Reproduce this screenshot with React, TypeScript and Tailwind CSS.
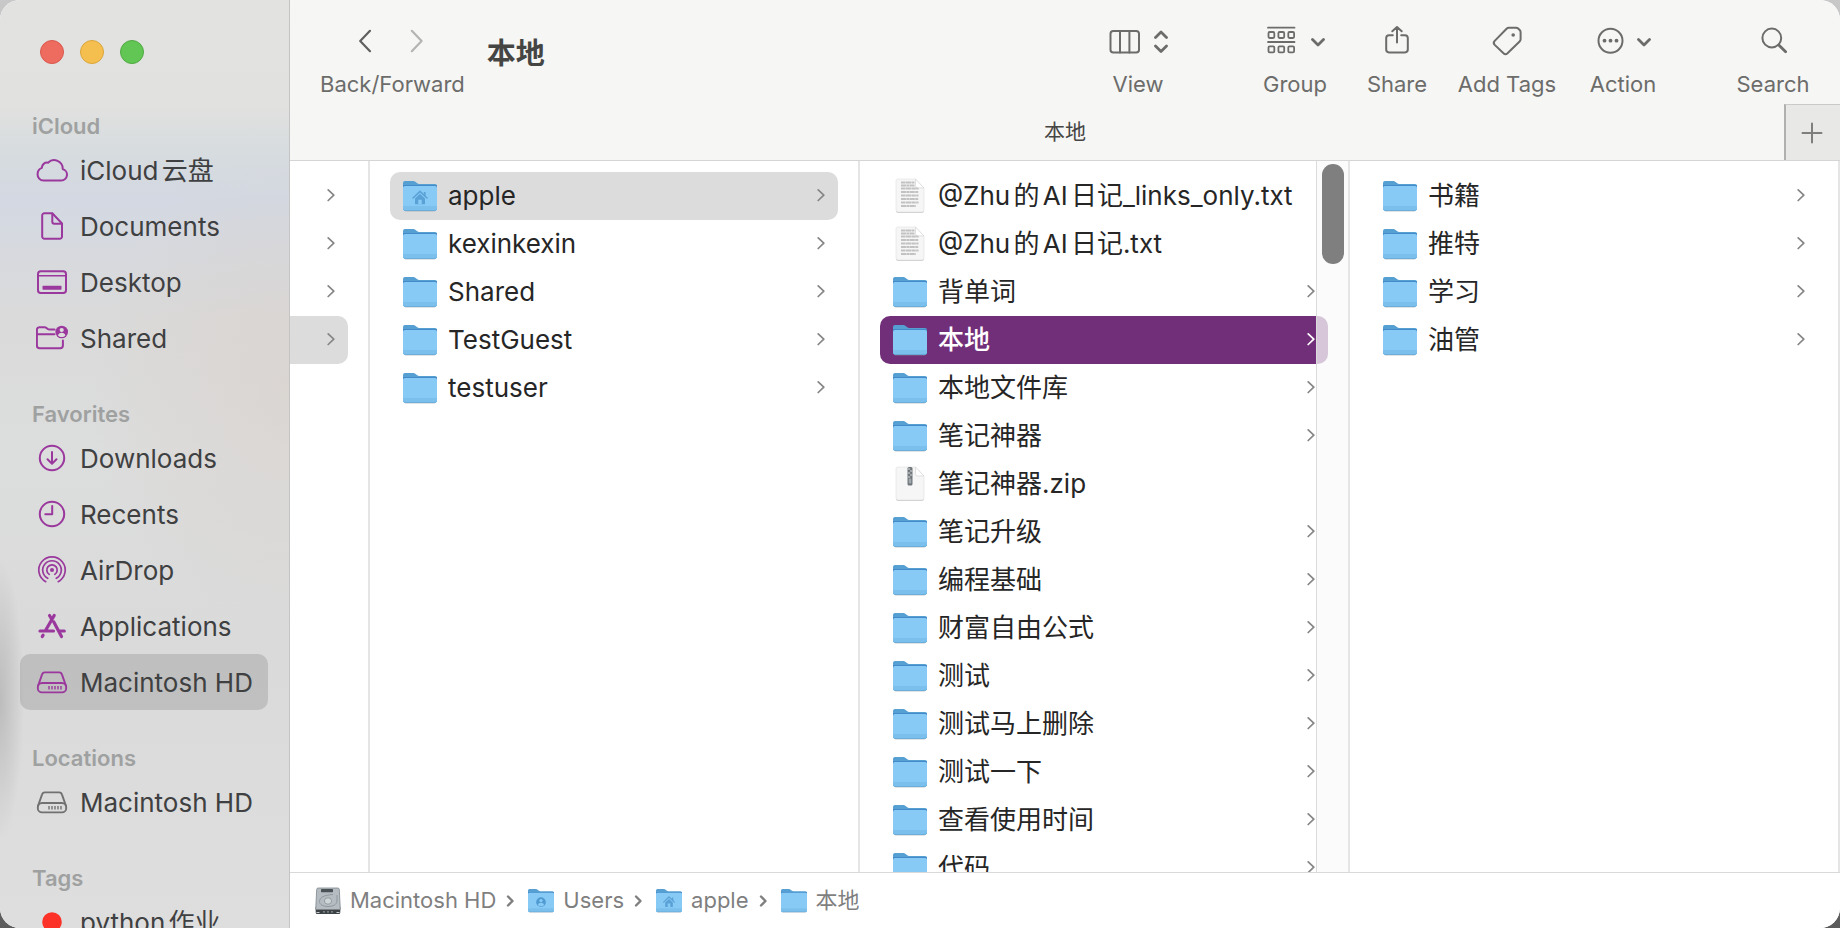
import type { ReactNode } from "react";

const TXT = "font-['Inter','Noto_Sans_CJK_SC',sans-serif] [text-autospace:normal]";

function FolderIcon({ glyph, className }: { glyph?: "home" | "user"; className: string }) {
  return (
    <svg viewBox="0 0 34 31" preserveAspectRatio="none" className={className} aria-hidden="true">
      <path d="M1.5 28.5h31a1.5 1.5 0 0 1-1.5 2H3a1.5 1.5 0 0 1-1.5-2Z" fill="#8f9aa3" opacity=".55" />
      <path d="M0 2a2 2 0 0 1 2-2h8.2c1 0 1.700.3 2.400.9L14.300 2.300c.5.4 1 .6 1.700.6H32a2 2 0 0 1 2 2V12H0Z" fill="#559fd3" />
      <path d="M0 4.300h34V9H0Z" fill="#3f86c6" />
      <path d="M0 6.800a1.800 1.800 0 0 1 1.800-1.800h30.400A1.800 1.800 0 0 1 34 6.800v20.800a2 2 0 0 1-2 2H2a2 2 0 0 1-2-2Z" fill="#88caf6" />
      <path d="M0 25h34v2.600a2 2 0 0 1-2 2H2a2 2 0 0 1-2-2Z" fill="#7bbfec" />
      <path d="M.3 28.300c.4.800 1 1.200 1.700 1.200h30c.8 0 1.400-.5 1.700-1.200" fill="none" stroke="#5fa3d4" strokeWidth=".7" />
      {glyph === "home" && (
        <g fill="none" stroke="#5aa2d6">
          <path d="M10 17 17 10.300l7 6.700" strokeWidth="1.600" strokeLinecap="round" />
          <path d="M21.700 11v4" strokeWidth="1.800" />
          <path d="M12 17.500l5-4.700 5 4.700V23.200H12Z" fill="#5aa2d6" stroke="none" />
          <path d="M15.300 18.700h3.400v4.500h-3.400Z" fill="#88caf6" stroke="none" />
        </g>
      )}
      {glyph === "user" && (
        <g>
          <circle cx="17" cy="17" r="6.300" fill="#4f9bd1" />
          <circle cx="17" cy="15" r="2.200" fill="#88caf6" />
          <path d="M13 20.600c.4-2 2-3 4-3s3.600 1 4 3c-1 1-2.400 1.600-4 1.600s-3-.6-4-1.600Z" fill="#88caf6" />
        </g>
      )}
    </svg>
  );
}

function DocIcon({ zip }: { zip?: boolean }) {
  const rows = [4.5, 7.5, 10.5, 14, 17.5, 21, 24.500, 28];
  return (
    <svg viewBox="0 0 34 36" className="h-9 w-[34px]" aria-hidden="true">
      <path d="M5 1.600h17l9 9V32a2 2 0 0 1-2 2H5a2 2 0 0 1-2-2V3.600a2 2 0 0 1 2-2Z" fill="#bdbdbd" transform="translate(0 .7)" />
      <path d="M5 1h17.500l8.500 9v22a2 2 0 0 1-2 2H5a2 2 0 0 1-2-2V3a2 2 0 0 1 2-2Z" fill="#f6f6f6" stroke="#e0e0e0" strokeWidth=".6" />
      <path d="M22.500 1v7a2 2 0 0 0 2 2H31Z" fill="#fff" stroke="#d6d6d6" strokeWidth=".7" />
      {zip ? (
        <g>
          <rect x="14.500" y="1" width="5" height="18.500" rx="1.500" fill="#70767a" />
          <path d="M15 3h2.200M17 5h2.200M15 7h2.200M17 9h2.200M15 11h2.200" stroke="#d3dadd" strokeWidth="1.200" />
          <rect x="15.700" y="12.500" width="2.600" height="5" rx="1" fill="#9fa8ad" />
        </g>
      ) : (
        <g stroke="#c2c2c2" strokeWidth="2.200" fill="none">
          {rows.map((y, i) => (
            <path key={y} d={`M8 ${y}h${i < 2 ? 13.5 : i === 7 ? 15 : 17.500}`} strokeDasharray={i % 2 ? "5 .4 3 .4" : "4 .4 6 .4"} />
          ))}
        </g>
      )}
    </svg>
  );
}

function DriveIcon() {
  return (
    <svg viewBox="0 0 26 28" className="h-7 w-[26px]" aria-hidden="true">
      <path d="M.7 20h24.600v5.500a1.500 1.500 0 0 1-1.500 1.500H2.200a1.500 1.500 0 0 1-1.500-1.500Z" fill="#3c4245" />
      <path d="M3.200 1h19.600a1.500 1.500 0 0 1 1.500 1.300l1 20.200H.7L1.700 2.300A1.500 1.500 0 0 1 3.200 1Z" fill="#b5bdc2" stroke="#7d858a" strokeWidth=".8" />
      <rect x="6" y="2" width="12" height="3.200" rx=".6" fill="#4b5256" />
      <ellipse cx="13" cy="14" rx="3.600" ry="3.200" fill="#cfd6da" stroke="#899196" strokeWidth=".8" />
      <path d="M18 7.500C9 8 4.500 10.500 4.500 14.500c0 3 3.500 5 8.500 5s9-2 9-5.500V8" fill="none" stroke="#8b9398" strokeWidth=".9" />
      <path d="M8 24.800h2M12 24.800h2M16 24.800h2" stroke="#8b9398" strokeWidth="1.300" />
      <path d="M1.500 25.500h3M21.500 25.500h3" stroke="#c6cccf" strokeWidth="1.200" />
    </svg>
  );
}

function Chevron({ className }: { className: string }) {
  return (
    <svg viewBox="0 0 8 14" className={`h-[14px] w-2 shrink-0 ${className}`} fill="none" stroke="currentColor" strokeWidth="1.700" strokeLinecap="round" strokeLinejoin="round" aria-hidden="true">
      <path d="M1.200.9 6.800 6.200l-5.600 5.300" />
    </svg>
  );
}

function Line({ children, w = 2 }: { children: ReactNode; w?: number }) {
  return (
    <svg viewBox="0 0 32 32" className="size-8 shrink-0" fill="none" stroke="currentColor" strokeWidth={w} strokeLinecap="round" strokeLinejoin="round" aria-hidden="true">
      {children}
    </svg>
  );
}

const hd = (
  <Line w={1.900}>
    <path d="M2 20 6 8.600a3 3 0 0 1 2.800-2.200H23.200A3 3 0 0 1 26 8.600L30 20" />
    <rect x="1.800" y="17" width="28.400" height="9.400" rx="4.200" />
    <path d="M13 20v3.600M16 20v3.600M19 20v3.600M22 20v3.600M25 20v3.600" strokeWidth="1.400" strokeLinecap="butt" />
  </Line>
);

const icons: Record<string, ReactNode> = {
  cloud: (
    <Line>
      <path d="M7.500 26.500h17.800a5.800 5.800 0 0 0 1.400-11.400A8.600 8.600 0 0 0 12 8.700a5.300 5.300 0 0 0-6.200 5.200 6.600 6.600 0 0 0-4.200 6.200 6 6 0 0 0 5.900 6.400Z" />
    </Line>
  ),
  doc: (
    <Line>
      <path d="M8.500 3.200h7.800L26 13.500v13a2.300 2.300 0 0 1-2.300 2.300H8.500a2.300 2.300 0 0 1-2.300-2.300v-21a2.300 2.300 0 0 1 2.300-2.300Z" />
      <path d="M16.300 3.700v8a2 2 0 0 0 2 2h7.400" />
    </Line>
  ),
  desktop: (
    <Line>
      <rect x="2" y="5.200" width="28" height="21.800" rx="2.800" />
      <path d="M2.500 9.800h27" strokeWidth="1.500" />
      <rect x="6.500" y="19.800" width="19" height="4" rx=".8" fill="currentColor" stroke="none" />
    </Line>
  ),
  shared: (
    <Line>
      <path d="M18.500 7.600h-4.800c-1 0-1.600-.3-2.300-.9l-.9-.8c-.6-.5-1-.7-1.900-.7H3.300A2.500 2.500 0 0 0 .9 7.700V23.500A2.700 2.700 0 0 0 3.600 26.200H24.200a2.700 2.700 0 0 0 2.700-2.700V18.500M1 12.200h17.500" />
      <circle cx="25.700" cy="10" r="6.300" fill="currentColor" stroke="none" />
      <circle cx="25.700" cy="8" r="2.100" fill="#ddd" stroke="none" />
      <path d="M22 13.400c.4-1.800 1.800-2.600 3.700-2.600s3.300.8 3.700 2.600c-2 2-5.400 2-7.400 0Z" fill="#ddd" stroke="none" />
    </Line>
  ),
  downloads: (
    <Line>
      <circle cx="16" cy="16" r="12.200" />
      <path d="M16 10v11.500M11.500 17.300l4.500 4.400 4.500-4.400" />
    </Line>
  ),
  recents: (
    <Line>
      <circle cx="16" cy="16" r="12.200" />
      <path d="M16.200 8v8.200H9.300" />
    </Line>
  ),
  airdrop: (
    <Line w={1.700}>
      <circle cx="16" cy="16" r="2" fill="currentColor" stroke="none" />
      <path d="M13.200 20.400a5.200 5.200 0 1 1 5.600 0" />
      <path d="M11.700 24.300a9.300 9.300 0 1 1 8.600 0" />
      <path d="M9.800 27.700a13.200 13.200 0 1 1 12.400 0" />
    </Line>
  ),
  apps: (
    <Line w={3.200}>
      <path d="M18.200 5.500 9.800 20M13.500 5.500l1.800 3M4 21h13.500M24 21h4.300M17.800 12 25.500 26.500M6.300 26.500l.8-1.400" />
    </Line>
  ),
  hd,
  tag: (
    <Line>
      <circle cx="16" cy="16" r="9.800" fill="#fc3228" stroke="none" />
    </Line>
  ),
};

type SideItem = { icon: string; label: string; active?: boolean; gray?: boolean };
const sections: { title: string; items: SideItem[] }[] = [
  {
    title: "iCloud",
    items: [
      { icon: "cloud", label: "iCloud云盘" },
      { icon: "doc", label: "Documents" },
      { icon: "desktop", label: "Desktop" },
      { icon: "shared", label: "Shared" },
    ],
  },
  {
    title: "Favorites",
    items: [
      { icon: "downloads", label: "Downloads" },
      { icon: "recents", label: "Recents" },
      { icon: "airdrop", label: "AirDrop" },
      { icon: "apps", label: "Applications" },
      { icon: "hd", label: "Macintosh HD", active: true },
    ],
  },
  { title: "Locations", items: [{ icon: "hd", label: "Macintosh HD", gray: true }] },
  { title: "Tags", items: [{ icon: "tag", label: "python作业" }] },
];

function Sidebar() {
  return (
    <aside className="flex w-[290px] shrink-0 flex-col overflow-hidden border-r border-[#c4c4c4] bg-[radial-gradient(ellipse_24px_140px_at_0px_700px,rgba(90,90,90,0.24),transparent),radial-gradient(ellipse_200px_240px_at_290px_390px,rgba(217,207,200,0.5),transparent),linear-gradient(180deg,#e2e2e0_0px,#e1e1df_105px,#d7dcdf_150px,#d3d8e2_200px,#d6d9df_240px,#dadada_320px,#dcdddd_450px,#dadada_650px,#dedede_928px)] pr-[21px] pl-5">
      <div className="flex h-[108px] shrink-0 gap-4 pt-10 pl-5">
        <button aria-label="Close" className="size-6 rounded-full border border-[#d9574c] bg-[#ed6b5f]" />
        <button aria-label="Minimize" className="size-6 rounded-full border border-[#dba53c] bg-[#f5bf4f]" />
        <button aria-label="Zoom" className="size-6 rounded-full border border-[#50aa42] bg-[#62c655]" />
      </div>
      <nav className="flex flex-col gap-[30px]">
        {sections.map((s) => (
          <section key={s.title}>
            <h2 className="h-[34px] pl-3 text-[22px] leading-9 font-semibold text-[#9fa1a1]">{s.title}</h2>
            <ul>
              {s.items.map((it) => (
                <li key={it.label}>
                  <a
                    href="#"
                    className={`flex h-14 items-center gap-3 rounded-[10px] pl-4 text-[26px] whitespace-nowrap text-[#3f4041] ${it.active ? "bg-black/12" : ""}`}
                  >
                    <span className={it.gray ? "text-[#717171]" : "text-[#9a389d]"}>{icons[it.icon]}</span>
                    {it.label}
                  </a>
                </li>
              ))}
            </ul>
          </section>
        ))}
      </nav>
    </aside>
  );
}

function Tool({ label, className, children }: { label: string; className: string; children: ReactNode }) {
  return (
    <button className={`flex flex-col items-center text-[#6c6c6b] ${className}`}>
      <span className="flex h-[70px] items-center pt-3.5">{children}</span>
      <span className="text-[22px] leading-7 whitespace-nowrap">{label}</span>
    </button>
  );
}

function Down() {
  return (
    <svg viewBox="0 0 14 32" className="h-8 w-3.5" fill="none" stroke="currentColor" strokeWidth="2.800" strokeLinecap="round" strokeLinejoin="round" aria-hidden="true">
      <path d="M1.500 13.500 7 19l5.500-5.500" />
    </svg>
  );
}

function Toolbar() {
  return (
    <header className="shrink-0 border-b border-[#d5d5d5] bg-[#f6f6f4]">
      <div className="flex h-[104px] items-start">
        <div className="mr-[22px] ml-[30px] flex flex-col items-center">
          <div className="flex h-[70px] items-center gap-[38px] pt-3 pr-0.5">
            <button aria-label="Back" className="text-[#606060]">
              <svg viewBox="0 0 14 24" className="h-6 w-3.5" fill="none" stroke="currentColor" strokeWidth="2.200" strokeLinecap="round" strokeLinejoin="round">
                <path d="M12 1.800 2.200 12 12 22.200" />
              </svg>
            </button>
            <button aria-label="Forward" className="text-[#b4b4b3]">
              <svg viewBox="0 0 14 24" className="h-6 w-3.5" fill="none" stroke="currentColor" strokeWidth="2.200" strokeLinecap="round" strokeLinejoin="round">
                <path d="M1.800 1.800 11.600 12 1.800 22.200" />
              </svg>
            </button>
          </div>
          <span className="text-[22px] leading-7 text-[#6c6c6b]">Back/Forward</span>
        </div>
        <h1 className="flex h-[104px] flex-1 items-center pt-1 text-[29px] font-bold text-[#454544]">本地</h1>
        <Tool label="View" className="w-[100px]">
          <span className="flex items-center gap-3.5">
            <Line>
              <rect x="2.500" y="5" width="28.500" height="21.500" rx="2.800" />
              <path d="M12 5v21.500M21.400 5v21.500" />
            </Line>
            <svg viewBox="0 0 14 32" className="h-8 w-3.5" fill="none" stroke="currentColor" strokeWidth="2.800" strokeLinecap="round" strokeLinejoin="round" aria-hidden="true">
              <path d="M1.500 11.500 7 6l5.500 5.500M1.500 20 7 25.500 12.500 20" />
            </svg>
          </span>
        </Tool>
        <Tool label="Group" className="ml-[57px] w-[100px]">
          <span className="flex items-center gap-3.5">
            <Line w={1.800}>
              <path d="M3 1.700h26.500M3 16h26.500" />
              <rect x="3.500" y="6" width="5.800" height="6" rx="1.200" />
              <rect x="13.400" y="6" width="5.800" height="6" rx="1.200" />
              <rect x="23.300" y="6" width="5.800" height="6" rx="1.200" />
              <rect x="3.500" y="20.400" width="5.800" height="6" rx="1.200" />
              <rect x="13.400" y="20.400" width="5.800" height="6" rx="1.200" />
              <rect x="23.300" y="20.400" width="5.800" height="6" rx="1.200" />
            </Line>
            <Down />
          </span>
        </Tool>
        <Tool label="Share" className="ml-3 w-20">
          <Line>
            <path d="M11.800 9.300H8A2.800 2.800 0 0 0 5.200 12.100v11.500a2.800 2.800 0 0 0 2.800 2.800H24a2.800 2.800 0 0 0 2.800-2.800v-11.500A2.800 2.800 0 0 0 24 9.300H20.200M16 16.500V1M11.300 5.300 16 1l4.700 4.300" />
          </Line>
        </Tool>
        <Tool label="Add Tags" className="ml-[15px] w-[110px]">
          <Line>
            <path d="M17.800 1.700h7.300c1 0 1.600.3 2.300 1l1.300 1.300c.6.6.9 1.300.9 2.200v7c0 1-.3 1.600-1 2.300L16.500 27.300c-1.400 1.300-2.700 1.300-4 0L3.700 18.900c-1.300-1.400-1.300-2.700 0-4L15.600 2.700c.7-.7 1.300-1 2.200-1Z" />
            <circle cx="22.200" cy="9" r="1.800" fill="currentColor" stroke="none" />
          </Line>
        </Tool>
        <Tool label="Action" className="ml-4 w-[90px]">
          <span className="flex items-center gap-2.5">
            <Line>
              <circle cx="15.500" cy="14.700" r="12" />
              <g fill="currentColor" stroke="none">
                <circle cx="9.500" cy="14.700" r="1.900" />
                <circle cx="15.500" cy="14.700" r="1.900" />
                <circle cx="21.500" cy="14.700" r="1.900" />
              </g>
            </Line>
            <Down />
          </span>
        </Tool>
        <Tool label="Search" className="mr-[27px] ml-[65px] w-20">
          <Line>
            <circle cx="14.800" cy="12" r="9.400" />
            <path d="M21.800 19l6.800 6.800" strokeWidth="2.800" />
          </Line>
        </Tool>
      </div>
      <div className="relative flex h-14 items-center justify-center">
        <span className="text-[21px] text-[#454544]">本地</span>
        <button aria-label="New tab" className="absolute top-0 right-0 flex h-14 w-14 items-center justify-center border-t border-l-2 border-t-[#cacac8] border-l-[#b0b0af] bg-[#e8e8e6] pr-0.5 text-[#7e7e7d]">
          <svg viewBox="0 0 22 22" className="size-[22px]" stroke="currentColor" strokeWidth="2" strokeLinecap="round">
            <path d="M11 1.500v19M1.500 11h19" />
          </svg>
        </button>
      </div>
    </header>
  );
}

type Entry = { name: string; kind?: "txt" | "zip" | "home"; state?: "gray" | "active" };

const users: Entry[] = [
  { name: "apple", kind: "home", state: "gray" },
  { name: "kexinkexin" },
  { name: "Shared" },
  { name: "TestGuest" },
  { name: "testuser" },
];

const files: Entry[] = [
  { name: "@Zhu的AI日记_links_only.txt", kind: "txt" },
  { name: "@Zhu的AI日记.txt", kind: "txt" },
  { name: "背单词" },
  { name: "本地", state: "active" },
  { name: "本地文件库" },
  { name: "笔记神器" },
  { name: "笔记神器.zip", kind: "zip" },
  { name: "笔记升级" },
  { name: "编程基础" },
  { name: "财富自由公式" },
  { name: "测试" },
  { name: "测试马上删除" },
  { name: "测试一下" },
  { name: "查看使用时间" },
  { name: "代码" },
];

const local: Entry[] = [{ name: "书籍" }, { name: "推特" }, { name: "学习" }, { name: "油管" }];

function Column({ items, children }: { items: Entry[]; children?: ReactNode }) {
  return (
    <div className="relative min-w-0 flex-1 overflow-hidden border-r-2 border-[#e5e5e5] px-5 pt-[11px]">
      <ul>
        {items.map((e) => {
          const isFile = e.kind === "txt" || e.kind === "zip";
          const tone = e.state === "active" ? "bg-[#722f79] font-medium text-white" : e.state === "gray" ? "bg-[#dcdcdc] text-[#262626]" : "text-[#262626]";
          return (
            <li key={e.name}>
              <button className={`flex h-12 w-full items-center gap-[11px] rounded-[10px] px-[13px] text-left text-[26px] whitespace-nowrap ${tone}`}>
                {isFile ? <DocIcon zip={e.kind === "zip"} /> : <FolderIcon glyph={e.kind === "home" ? "home" : undefined} className="h-[31px] w-[34px] shrink-0" />}
                <span className="flex-1 pb-0.5">{e.name}</span>
                {!isFile && <Chevron className={e.state === "active" ? "text-white" : "text-[#868686]"} />}
              </button>
            </li>
          );
        })}
      </ul>
      {children}
    </div>
  );
}

const crumbs: { name: string; icon: ReactNode }[] = [
  { name: "Macintosh HD", icon: <DriveIcon /> },
  { name: "Users", icon: <FolderIcon glyph="user" className="h-6 w-[26px]" /> },
  { name: "apple", icon: <FolderIcon glyph="home" className="h-6 w-[26px]" /> },
  { name: "本地", icon: <FolderIcon className="h-6 w-[26px]" /> },
];

export default function App() {
  return (
    <div className="h-screen bg-[linear-gradient(180deg,#c8c8c8,#5b5b5b)]">
      <div className={`${TXT} flex h-full overflow-hidden rounded-[20px] bg-white`}>
        <Sidebar />
        <div className="flex min-w-0 flex-1 flex-col">
          <Toolbar />
          <main className="flex min-h-0 flex-1">
            <div className="w-20 shrink-0 border-r-2 border-[#e5e5e5] pt-[11px] pr-5">
              {[false, false, false, true].map((on, i) => (
                <button key={i} aria-label={`Open folder ${i + 1}`} className={`flex h-12 w-full items-center justify-end rounded-r-[10px] pr-[13px] text-[#868686] ${on ? "bg-[#dcdcdc]" : ""}`}>
                  <Chevron className="" />
                </button>
              ))}
            </div>
            <Column items={users} />
            <Column items={files}>
              <div className="absolute inset-y-0 right-0 w-8 border-l border-[#dcdcdc] bg-[#fafafa]/75 px-[5px] pt-[3px]">
                <div className="h-[100px] w-[22px] rounded-full bg-[#7f7f7f]" />
              </div>
            </Column>
            <Column items={local} />
          </main>
          <footer className="flex h-14 shrink-0 items-center border-t border-[#d9d9d9] bg-white px-[25px] text-[22px] text-[#7f7f7f]">
            {crumbs.map((c, i) => (
              <div key={c.name} className="flex items-center">
                {i > 0 && (
                  <svg viewBox="0 0 32 14" className="h-3.5 w-8" fill="none" stroke="currentColor" strokeWidth="2.400" strokeLinecap="round" strokeLinejoin="round" aria-hidden="true">
                    <path d="M12 2.500 16.500 7 12 11.500" />
                  </svg>
                )}
                <a href="#" className="flex items-center gap-[9px]">
                  {c.icon}
                  {c.name}
                </a>
              </div>
            ))}
          </footer>
        </div>
      </div>
    </div>
  );
}
